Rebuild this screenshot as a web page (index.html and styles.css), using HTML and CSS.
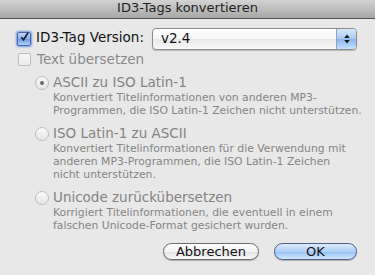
FILE: index.html
```html
<!DOCTYPE html>
<html lang="de">
<head>
    <meta charset="UTF-8">
    <title>ID3-Tags konvertieren</title>
    <link rel="stylesheet" href="styles.css">
</head>
<body>
    <div class="window">
        <div class="titlebar">ID3-Tags konvertieren</div>
        <div class="content">
            <div class="version-row">
                <span class="checkbox checked">
                    <svg width="14" height="14" viewBox="0 0 14 14"><path d="M3 7.5 L5.8 10.5 L11.5 1.5" fill="none" stroke="#18223c" stroke-width="2.2"/></svg>
                </span>
                <span class="label">ID3-Tag Version:</span>
                <div class="select">
                    <span class="select-value">v2.4</span>
                    <span class="select-arrows">
                        <svg width="8" height="12" viewBox="0 0 8 12"><path d="M1.2 5 L4 1.5 L6.8 5 Z M1.2 7 L4 10.5 L6.8 7 Z" fill="#1a1a1a"/></svg>
                    </span>
                </div>
            </div>
            <div class="check-row disabled">
                <span class="checkbox"></span>
                <span class="label">Text übersetzen</span>
            </div>
            <div class="options">
                <div class="option">
                    <div class="option-head">
                        <span class="radio selected"></span>
                        <span class="label">ASCII zu ISO Latin-1</span>
                    </div>
                    <p class="desc">Konvertiert Titelinformationen von anderen MP3-<br>Programmen, die ISO Latin-1 Zeichen nicht unterstützen.</p>
                </div>
                <div class="option">
                    <div class="option-head">
                        <span class="radio"></span>
                        <span class="label">ISO Latin-1 zu ASCII</span>
                    </div>
                    <p class="desc">Konvertiert Titelinformationen für die Verwendung mit<br>anderen MP3-Programmen, die ISO Latin-1 Zeichen<br>nicht unterstützen.</p>
                </div>
                <div class="option">
                    <div class="option-head">
                        <span class="radio"></span>
                        <span class="label">Unicode zurückübersetzen</span>
                    </div>
                    <p class="desc">Korrigiert Titelinformationen, die eventuell in einem<br>falschen Unicode-Format gesichert wurden.</p>
                </div>
            </div>
            <div class="buttons">
                <div class="btn">Abbrechen</div>
                <div class="btn default">OK</div>
            </div>
        </div>
    </div>
</body>
</html>
```

FILE: styles.css
```css
* {
    margin: 0;
    padding: 0;
    box-sizing: border-box;
}

body {
    width: 375px;
    height: 275px;
    overflow: hidden;
    background-color: #e8e8e8;
    font-family: "Lucida Grande", "DejaVu Sans", sans-serif;
    font-size: 13.5px;
    color: #111;
}

.window {
    width: 375px;
    height: 275px;
}

.titlebar {
    height: 19px;
    line-height: 16px;
    text-align: center;
    font-size: 13px;
    color: #1e1e1e;
    background: linear-gradient(#d3d3d3, #a7a7a7);
    border-bottom: 1px solid #555;
}

.content {
    padding: 8px 18px 0 17px;
}

.version-row {
    display: flex;
    align-items: center;
    height: 23px;
}

.version-row .label {
    margin-left: 5px;
    line-height: 17px;
    padding-bottom: 2px;
}

.checkbox {
    width: 14px;
    height: 14px;
    flex: none;
    border: 1px solid #b8b8b8;
    border-radius: 2px;
    background: linear-gradient(#fdfdfd, #e6e6e6);
    display: flex;
    align-items: center;
    justify-content: center;
}

.checkbox.checked {
    border-color: #4a68a8;
    background: linear-gradient(#c6daf6, #86aee8 50%, #6d9ce4 51%, #b0d0f8);
    box-shadow: 0 0 2px 1px #6f9ae0;
}

.checkbox svg {
    margin-top: -3px;
    margin-left: 1px;
}

.select {
    margin-left: auto;
    width: 205px;
    height: 22px;
    display: flex;
    border: 1px solid #8c8c8c;
    border-radius: 4px;
    overflow: hidden;
    background: linear-gradient(#ffffff, #f6f6f6 50%, #e8e8e8 51%, #f8f8f8);
    box-shadow: 0 1px 1px rgba(0, 0, 0, 0.2);
}

.select-value {
    flex: 1;
    padding-left: 8px;
    line-height: 19px;
}

.select-arrows {
    width: 20px;
    display: flex;
    align-items: center;
    justify-content: center;
    border-left: 1px solid #8da4c8;
    background: linear-gradient(#d8e8fb, #a8c8f2 50%, #8ab6ee 51%, #c6e2fc);
}

.check-row {
    display: flex;
    align-items: center;
    height: 17px;
    margin-top: 1px;
    padding-left: 1px;
}

.check-row .checkbox {
    width: 13px;
    height: 13px;
}

.check-row .label {
    margin-left: 6px;
    line-height: 17px;
}

.disabled {
    color: #8a8a8a;
}

.disabled .checkbox {
    border-color: #bdbdbd;
    background: linear-gradient(#f8f8f8, #ececec);
}

.options {
    padding-left: 18px;
    margin-top: 6px;
    color: #838383;
}

.option {
    padding-bottom: 8px;
}

.option:last-child {
    padding-bottom: 0;
}

.option-head {
    display: flex;
    align-items: center;
    height: 17px;
}

.option-head .label {
    margin-left: 4px;
    line-height: 17px;
}

.radio {
    width: 14px;
    height: 14px;
    flex: none;
    border: 1px solid #bcbcbc;
    border-radius: 50%;
    background: linear-gradient(#f8f8f8, #e6e6e6);
    display: flex;
    align-items: center;
    justify-content: center;
}

.radio.selected::after {
    content: "";
    width: 4px;
    height: 4px;
    border-radius: 50%;
    background-color: #6a6a6a;
}

.desc {
    padding-left: 18px;
    font-size: 10.8px;
    line-height: 13px;
    white-space: nowrap;
    color: #858585;
}

.buttons {
    display: flex;
    justify-content: flex-end;
    gap: 15px;
    margin-top: 11px;
}

.btn {
    width: 96px;
    height: 17px;
    line-height: 15px;
    text-align: center;
    font-size: 13px;
    color: #111;
    border: 1px solid #6a6a6a;
    border-radius: 9px;
    background: linear-gradient(#ffffff, #f2f2f2 50%, #e2e2e2 51%, #fafafa);
    box-shadow: 0 1px 1px rgba(0, 0, 0, 0.25);
}

.btn.default {
    width: 83px;
    border-color: #4f5f8c;
    background: linear-gradient(#dcebfd, #b0d0f6 50%, #94c0f2 51%, #d0e8fe);
}
```
